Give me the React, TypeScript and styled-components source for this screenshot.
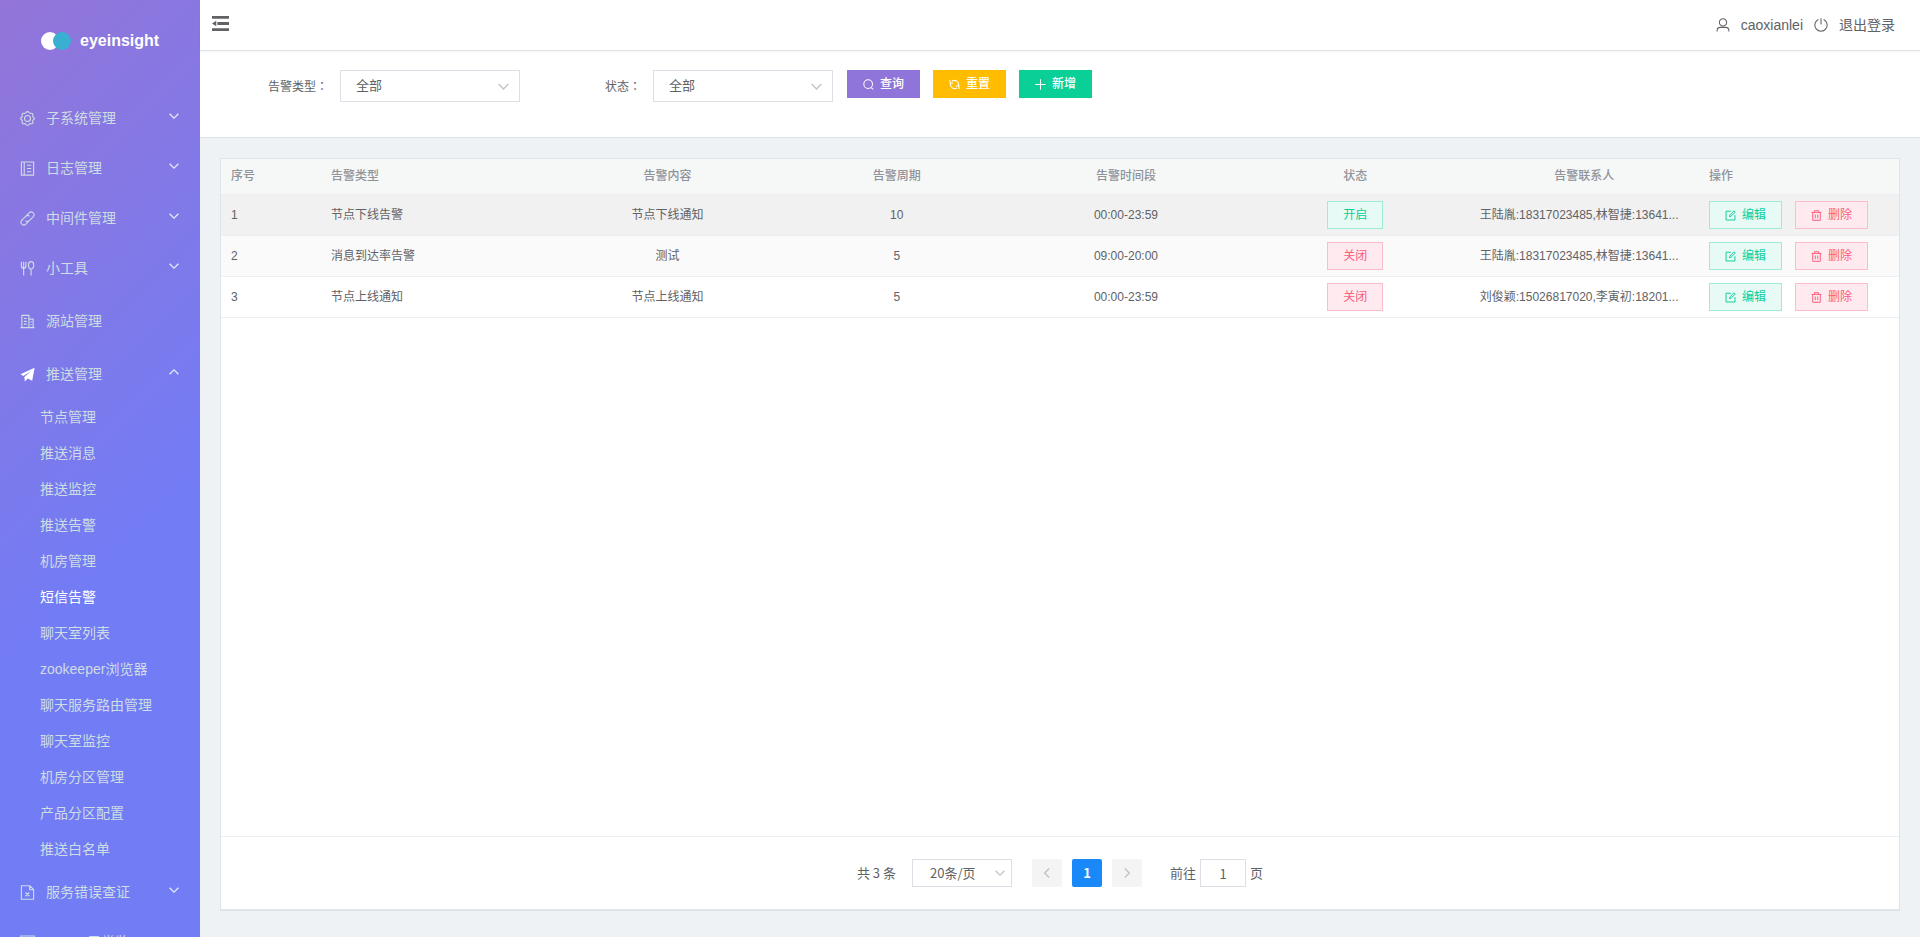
import React from 'react';
import styled, { createGlobalStyle, css } from 'styled-components';

const GlobalStyle = createGlobalStyle`
  *, *::before, *::after { box-sizing: border-box; }
  body {
    margin: 0;
    background: #eef2f4;
    color: #606266;
    font: 14px/20px "Liberation Sans", "Noto Sans CJK SC", sans-serif;
  }
  button, input, select { font: inherit; margin: 0; }
  ul { list-style: none; margin: 0; padding: 0; }
  a { color: inherit; text-decoration: none; }
`;

/* ---------- icons ---------- */

type IconName =
  | 'setting' | 'notebook' | 'link' | 'tools' | 'building' | 'send' | 'fileError' | 'document'
  | 'down' | 'up' | 'left' | 'right' | 'search' | 'refresh' | 'plus' | 'edit' | 'trash'
  | 'user' | 'power' | 'fold';

const shapes: Record<IconName, React.ReactNode> = {
  setting: (
    <>
      <path d="M6.2 1.9 Q7 0.6 8 0.6 Q9 0.6 9.8 1.9 Q10.3 2.6 11.2 2.5 Q12.8 2.1 13.5 2.9 Q14.1 3.7 13.6 5.1 Q13.3 5.9 14 6.6 Q15.4 7.3 15.4 8 Q15.4 8.9 14 9.5 Q13.3 10.2 13.6 11 Q14.1 12.4 13.5 13.2 Q12.8 13.9 11.2 13.5 Q10.3 13.4 9.8 14.1 Q9 15.4 8 15.4 Q7 15.4 6.2 14.1 Q5.7 13.4 4.8 13.5 Q3.2 13.9 2.5 13.2 Q1.9 12.4 2.4 11 Q2.7 10.2 2 9.5 Q0.6 8.9 0.6 8 Q0.6 7.3 2 6.6 Q2.7 5.9 2.4 5.1 Q1.9 3.7 2.5 2.9 Q3.2 2.1 4.8 2.5 Q5.7 2.6 6.2 1.9Z" />
      <circle cx="8" cy="8" r="3.2" />
    </>
  ),
  notebook: <path d="M1.500 1h13v14h-13zM4.500 1v14M7.500 4.500h4.500M7.500 8h4.500M7.500 11.500h4.500" />,
  link: (
    <>
      <path d="M6.600 5.200 9.800 2a2.900 2.900 0 0 1 4.200 4.200L9.900 10.300a2.900 2.900 0 0 1-4.100 0" />
      <path d="M9.400 10.800 6.200 14A2.900 2.900 0 0 1 2 9.800L6.100 5.700a2.900 2.900 0 0 1 4.100 0" />
    </>
  ),
  tools: (
    <>
      <path d="M1.500 0.800v4.400a2.300 2.300 0 0 0 4.800 0V0.800M3.900 0.800V15.500" />
      <ellipse cx="11.800" cy="4.600" rx="2.800" ry="3.900" />
      <path d="M11.800 8.500v7" />
    </>
  ),
  building: <path d="M0.500 14.500h15M2 14.500V1.500h7.500v13M9.500 5.500H14v9M4.200 4.800h3M4.200 7.800h3M4.200 10.800h3M11 8.500h1.500M11 11.500h1.500" />,
  send: <path d="M0.500 7.800 15.600 0.800 13 14.600 8.300 12.300 5.200 15.500 4.600 10.600 12 4.200 3.600 9.700Z" fill="currentColor" stroke="none" />,
  fileError: <path d="M1.500 0.800h9l4 4v10.400h-13zM10.300 0.800v4.200h4.200M5.800 8l4.200 4M10 8l-4.200 4" />,
  document: <path d="M0.800 1h14.400v14H0.800zM4 5h8M4 8h8" />,
  down: <path d="M1 4.500 8 11.500l7-7" />,
  up: <path d="M1 11.500 8 4.500l7 7" />,
  left: <path d="M11 2 5 8l6 6" />,
  right: <path d="M5 2l6 6-6 6" />,
  search: (
    <>
      <circle cx="7.500" cy="7.500" r="6.300" />
      <path d="M11.500 12.500l3.500 2.500" />
    </>
  ),
  refresh: <path d="M4.500 3A6.200 6.200 0 0 1 13.500 10.500M11.500 13A6.200 6.200 0 0 1 2.500 5.500M1.500 1.500v4.300h4.300M14.500 14.500v-4.300h-4.300" />,
  plus: <path d="M8 0.500v15M0.500 8h15" />,
  edit: <path d="M8.500 1.800H1.500v12.700h13V7.500M6.500 9.800l0.600-2.600 6-6 1.800 1.800-6 6z" />,
  trash: <path d="M0.800 3.500h14.400M5 3.500V1h6v2.500M2.500 3.500V15h11V3.500M6.200 6.500v5.500M9.800 6.500v5.500" />,
  user: (
    <>
      <circle cx="8" cy="5" r="4.200" />
      <path d="M1.300 15.500v-1.300a3.500 3.500 0 0 1 3.500-3.500h6.400a3.500 3.500 0 0 1 3.500 3.500v1.300" />
    </>
  ),
  power: <path d="M5 1.800a7 7 0 1 0 6 0M8 0.300v7" />,
  fold: (
    <g stroke="none" fill="currentColor">
      <path d="M0 1h16v2.600H0zM5 6.700h11v2.600H5zM0 12.400h16V15H0zM0 8l4-2.700v5.400z" />
    </g>
  ),
};

const Svg = styled.svg<{ $size: number }>`
  flex: none;
  display: block;
  width: ${p => p.$size}px;
  height: ${p => p.$size}px;
`;

const Icon = ({ name, size = 14, weight = 1.2, className }: { name: IconName; size?: number; weight?: number; className?: string }) => (
  <Svg $size={size} className={className} viewBox="0 0 16 16" fill="none" stroke="currentColor" strokeWidth={weight} aria-hidden="true">
    {shapes[name]}
  </Svg>
);

/* ---------- frame ---------- */

const Layout = styled.div`
  display: grid;
  grid-template-columns: 200px minmax(0, 1fr);
  height: 100vh;
`;

const Sidebar = styled.aside`
  overflow: hidden;
  color: #cedce4;
  background: linear-gradient(135deg, #9375d8 0%, #727cf5 60%);
`;

const Logo = styled.div`
  display: flex;
  align-items: center;
  gap: 8px;
  height: 93px;
  padding: 0 40px 12px;
  color: #fff;
  font-size: 16px;
  font-weight: 700;
`;

const MenuItem = styled.a<{ $tall?: boolean }>`
  display: flex;
  align-items: center;
  gap: 11px;
  height: ${p => (p.$tall ? 56 : 50)}px;
  padding: 0 20px;
  white-space: nowrap;
`;

const Arrow = styled(Icon)`
  margin: 0 1px 4px auto;
  color: #e6ebf8;
`;

const PushIcon = styled(Icon)`
  color: #fff;
`;

const SubItem = styled.a<{ $active?: boolean }>`
  display: block;
  padding-left: 40px;
  line-height: 36px;
  color: ${p => (p.$active ? '#fff' : 'inherit')};
`;

const Main = styled.div`
  display: flex;
  flex-direction: column;
  min-width: 0;
`;

const Header = styled.header`
  display: flex;
  align-items: center;
  justify-content: space-between;
  flex: none;
  height: 51px;
  padding: 0 25px 0 12px;
  background: #fff;
  border-bottom: 1px solid #e3e5e7;
  box-shadow: 0 1px 2px rgba(0, 0, 0, 0.05);
  z-index: 1;
`;

const FoldButton = styled.button`
  padding: 0 0 3px;
  border: 0;
  background: none;
  color: #606266;
`;

const Account = styled.nav`
  display: flex;
  align-items: center;
  gap: 11px;
`;

const AccountLink = styled.a`
  display: flex;
  align-items: center;
  gap: 11px;
`;

/* ---------- filter form ---------- */

const Filters = styled.form`
  display: flex;
  flex: none;
  gap: 13px;
  height: 87px;
  padding: 19px 20px;
  background: #fff;
  border-bottom: 1px solid #dee2e6;
`;

const Actions = styled.div`
  display: flex;
  gap: 13px;
  padding-left: 1px;
`;

const Field = styled.div`
  display: flex;
  align-items: center;
  height: 32px;
`;

const Label = styled.label`
  width: 120px;
  padding-right: 12px;
  font-size: 12px;
  text-align: right;
`;

/* The TC face centres the full-width colon in its cell. */
const Colon = styled.span`
  font-family: "Noto Sans CJK TC", sans-serif;
`;

const SelectBox = styled.span<{ $small?: boolean }>`
  display: inline-grid;
  align-items: center;
  width: ${p => (p.$small ? 100 : 180)}px;
  height: ${p => (p.$small ? 28 : 32)}px;

  > * { grid-area: 1 / 1; }
  > svg {
    justify-self: end;
    margin-right: ${p => (p.$small ? 7 : 11)}px;
    color: #c0c4cc;
    pointer-events: none;
  }
`;

const Select = styled.select<{ $center?: boolean }>`
  appearance: none;
  width: 100%;
  height: 100%;
  padding: 0 ${p => (p.$center ? 17 : 15)}px;
  border: 1px solid #dcdfe6;
  border-radius: 0;
  background: #fff;
  color: #606266;
  font-size: 13px;
`;

type Tone = 'primary' | 'warning' | 'success';
const solid: Record<Tone, string> = { primary: '#8f75da', warning: '#ffbc00', success: '#0acf97' };

const buttonBase = css`
  display: inline-flex;
  align-items: center;
  justify-content: center;
  gap: 6px;
  height: 28px;
  padding: 0;
  border: 1px solid;
  font-size: 12px;
  line-height: 12px;
`;

const SolidButton = styled.button<{ $tone: Tone }>`
  ${buttonBase}
  width: 73px;
  border-color: ${p => solid[p.$tone]};
  background: ${p => solid[p.$tone]};
  color: #fff;
  font-weight: 500;
`;

const PlainButton = styled.button<{ $danger?: boolean; $narrow?: boolean }>`
  ${buttonBase}
  width: ${p => (p.$narrow ? 56 : 73)}px;
  border-color: ${p => (p.$danger ? '#fdbccb' : '#9decd5')};
  background: ${p => (p.$danger ? '#ffebef' : '#e7faf5')};
  color: ${p => (p.$danger ? '#fa5c7c' : '#0acf97')};
  & + & { margin-left: 13px; }
`;

/* ---------- table ---------- */

const Card = styled.section`
  display: flex;
  flex-direction: column;
  flex: 1;
  min-height: 0;
  margin: 20px 20px 26px;
  background: #fff;
  border: 1px solid #dee5e6;
  border-bottom-width: 2px;
`;

const TableArea = styled.div`
  flex: 1;
  min-height: 0;
  overflow: auto;
  border-bottom: 1px solid #ebeef5;
`;

const Table = styled.table`
  width: 100%;
  border-collapse: separate;
  border-spacing: 0;
  table-layout: fixed;
  font-size: 12px;
`;

const Col = styled.col<{ $width?: number }>`
  width: ${p => (p.$width ? `${p.$width}px` : 'auto')};
`;

const cell = css<{ $center?: boolean }>`
  padding: 0 10px;
  border-bottom: 1px solid #ebeef5;
  text-align: ${p => (p.$center ? 'center' : 'left')};
  white-space: nowrap;
`;

const Th = styled.th<{ $center?: boolean }>`
  ${cell}
  height: 36px;
  padding-bottom: 1px;
  background: #f6f8f8;
  color: #909399;
  font-weight: 500;
`;

const Td = styled.td<{ $center?: boolean }>`
  ${cell}
  height: 41px;
`;

const Row = styled.tr<{ $shade: string }>`
  background: ${p => p.$shade};
`;

/* ---------- pagination ---------- */

const Pager = styled.nav`
  display: flex;
  align-items: center;
  justify-content: center;
  flex: none;
  height: 72px;
  color: #606266;
  font-family: "Noto Sans CJK SC", sans-serif;
  font-size: 13px;
`;

const Total = styled.span`
  margin-right: 16px;
`;

const PageButtons = styled.div`
  display: flex;
  gap: 10px;
  margin: 0 28px 0 20px;
`;

const PageButton = styled.button<{ $current?: boolean }>`
  display: flex;
  align-items: center;
  justify-content: center;
  width: 30px;
  height: 28px;
  padding: 0;
  border: 0;
  border-radius: 2px;
  background: ${p => (p.$current ? '#1989fa' : '#f4f4f5')};
  color: ${p => (p.$current ? '#fff' : '#c0c4cc')};
  font-weight: 700;
`;

const Jump = styled.label`
  display: flex;
  align-items: center;
  gap: 4px;
`;

const JumpInput = styled.input`
  width: 46px;
  height: 28px;
  padding: 0;
  border: 1px solid #dcdfe6;
  color: #606266;
  text-align: center;
`;

/* ---------- data ---------- */

const menuTop: { icon: IconName; text: string; leaf?: boolean }[] = [
  { icon: 'setting', text: '子系统管理' },
  { icon: 'notebook', text: '日志管理' },
  { icon: 'link', text: '中间件管理' },
  { icon: 'tools', text: '小工具' },
  { icon: 'building', text: '源站管理', leaf: true },
];

const pushMenu = [
  '节点管理', '推送消息', '推送监控', '推送告警', '机房管理', '短信告警', '聊天室列表',
  'zookeeper浏览器', '聊天服务路由管理', '聊天室监控', '机房分区管理', '产品分区配置', '推送白名单',
];

const rows = [
  { type: '节点下线告警', content: '节点下线通知', cycle: 10, period: '00:00-23:59', on: true, contacts: '王陆胤:18317023485,林智捷:13641...', shade: '#f1f1f1' },
  { type: '消息到达率告警', content: '测试', cycle: 5, period: '09:00-20:00', on: false, contacts: '王陆胤:18317023485,林智捷:13641...', shade: '#fafafa' },
  { type: '节点上线通知', content: '节点上线通知', cycle: 5, period: '00:00-23:59', on: false, contacts: '刘俊颖:15026817020,李寅初:18201...', shade: '#fff' },
];

const LogoMark = () => (
  <svg width="32" height="18" viewBox="0 0 32 18" aria-hidden="true">
    <circle cx="10" cy="9" r="9" fill="#fff" />
    <circle cx="22" cy="9" r="9" fill="#39afd1" />
  </svg>
);

export default function App() {
  return (
    <>
      <GlobalStyle />
      <Layout>
        <Sidebar>
          <Logo><LogoMark />eyeinsight</Logo>
          <nav>
            <ul>
              {menuTop.map(m => (
                <li key={m.text}>
                  <MenuItem href="#" $tall={m.leaf}>
                    <Icon name={m.icon} size={15} />{m.text}
                    {!m.leaf && <Arrow name="down" size={10} weight={2} />}
                  </MenuItem>
                </li>
              ))}
              <li>
                <MenuItem href="#">
                  <PushIcon name="send" size={15} />推送管理
                  <Arrow name="up" size={10} weight={2} />
                </MenuItem>
                <ul>
                  {pushMenu.map(t => (
                    <li key={t}><SubItem href="#" $active={t === '短信告警'}>{t}</SubItem></li>
                  ))}
                </ul>
              </li>
              <li>
                <MenuItem href="#">
                  <Icon name="fileError" size={15} />服务错误查证
                  <Arrow name="down" size={10} weight={2} />
                </MenuItem>
              </li>
              <li>
                <MenuItem href="#"><Icon name="document" size={15} />Server异常监</MenuItem>
              </li>
            </ul>
          </nav>
        </Sidebar>

        <Main>
          <Header>
            <FoldButton type="button" aria-label="收起菜单"><Icon name="fold" size={17} /></FoldButton>
            <Account>
              <AccountLink href="#"><Icon name="user" size={14} />caoxianlei</AccountLink>
              <AccountLink href="#"><Icon name="power" size={14} />退出登录</AccountLink>
            </Account>
          </Header>

          <Filters onSubmit={e => e.preventDefault()}>
            <Field>
              <Label htmlFor="type">告警类型<Colon>：</Colon></Label>
              <SelectBox>
                <Select id="type"><option>全部</option></Select>
                <Icon name="down" size={11} weight={2} />
              </SelectBox>
            </Field>
            <Field>
              <Label htmlFor="status">状态<Colon>：</Colon></Label>
              <SelectBox>
                <Select id="status"><option>全部</option></Select>
                <Icon name="down" size={11} weight={2} />
              </SelectBox>
            </Field>
            <Actions>
              <SolidButton $tone="primary" type="submit"><Icon name="search" size={11} weight={1.5} />查询</SolidButton>
              <SolidButton $tone="warning" type="reset"><Icon name="refresh" size={11} weight={1.5} />重置</SolidButton>
              <SolidButton $tone="success" type="button"><Icon name="plus" size={11} weight={1.5} />新增</SolidButton>
            </Actions>
          </Filters>

          <Card>
            <TableArea>
              <Table>
                <colgroup>
                  <Col $width={100} /><Col $width={232} /><Col /><Col /><Col /><Col /><Col /><Col $width={200} />
                </colgroup>
                <thead>
                  <tr>
                    <Th>序号</Th>
                    <Th>告警类型</Th>
                    <Th $center>告警内容</Th>
                    <Th $center>告警周期</Th>
                    <Th $center>告警时间段</Th>
                    <Th $center>状态</Th>
                    <Th $center>告警联系人</Th>
                    <Th>操作</Th>
                  </tr>
                </thead>
                <tbody>
                  {rows.map((r, i) => (
                    <Row key={r.type} $shade={r.shade}>
                      <Td>{i + 1}</Td>
                      <Td>{r.type}</Td>
                      <Td $center>{r.content}</Td>
                      <Td $center>{r.cycle}</Td>
                      <Td $center>{r.period}</Td>
                      <Td $center>
                        <PlainButton type="button" $narrow $danger={!r.on}>{r.on ? '开启' : '关闭'}</PlainButton>
                      </Td>
                      <Td>{r.contacts}</Td>
                      <Td>
                        <PlainButton type="button"><Icon name="edit" size={11} weight={1.4} />编辑</PlainButton>
                        <PlainButton type="button" $danger><Icon name="trash" size={11} weight={1.4} />删除</PlainButton>
                      </Td>
                    </Row>
                  ))}
                </tbody>
              </Table>
            </TableArea>
            <Pager aria-label="分页">
              <Total>共 3 条</Total>
              <SelectBox $small>
                <Select $center aria-label="每页条数"><option>20条/页</option></Select>
                <Icon name="down" size={10} weight={2} />
              </SelectBox>
              <PageButtons>
                <PageButton type="button" aria-label="上一页"><Icon name="left" size={12} weight={2} /></PageButton>
                <PageButton type="button" $current>1</PageButton>
                <PageButton type="button" aria-label="下一页"><Icon name="right" size={12} weight={2} /></PageButton>
              </PageButtons>
              <Jump>前往<JumpInput defaultValue="1" />页</Jump>
            </Pager>
          </Card>
        </Main>
      </Layout>
    </>
  );
}
